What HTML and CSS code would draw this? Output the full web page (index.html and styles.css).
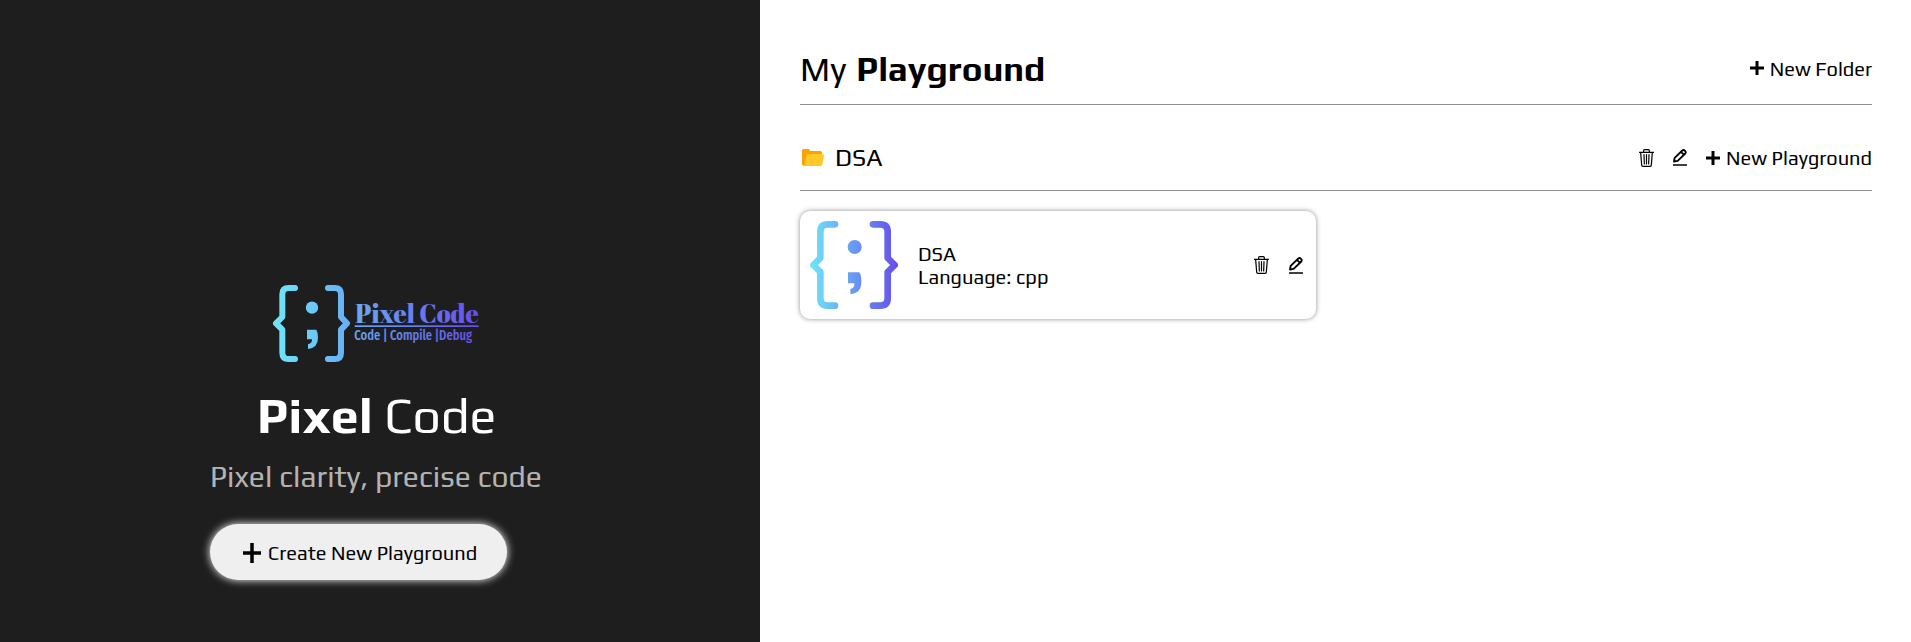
FILE: index.html
```html
<!DOCTYPE html>
<html lang="en">
<head>
<meta charset="utf-8">
<title>Pixel Code</title>
<link rel="stylesheet" href="styles.css">
</head>
<body>
<svg class="defs" width="0" height="0" aria-hidden="true">
  <symbol id="trash" viewBox="0 0 45 54">
    <path d="M1 10H44M14 9V5Q14 2 17 2H28Q31 2 31 5V9M5 11L8 48Q8 52 12 52H33Q37 52 37 48L40 11M15 17L16 45M22.500 17V45M30 17L29 45" fill="none" stroke="currentColor" stroke-width="3.600" stroke-linecap="round"/>
  </symbol>
  <symbol id="pen" viewBox="0 0 42 50">
    <path d="M3 37L5 26L28 4Q32 1 36 5Q40 9 37 13L14 35ZM24 8L33 17" fill="none" stroke="currentColor" stroke-width="5.500" stroke-linejoin="round"/>
    <path d="M0 47.500H42" stroke="currentColor" stroke-width="4.500"/>
  </symbol>
</svg>
<div class="page">
  <aside class="hero">
    <svg class="brand" viewBox="0 0 750 315">
      <defs>
        <linearGradient id="brandFill" gradientUnits="userSpaceOnUse" x1="69" y1="0" x2="686" y2="0">
          <stop offset="0" stop-color="#6fe6f8"/><stop offset=".38" stop-color="#69acf4"/><stop offset="1" stop-color="#674eee"/>
        </linearGradient>
      </defs>
      <g fill="none" stroke="url(#brandFill)" stroke-width="18" stroke-linecap="round" stroke-linejoin="round">
        <path d="M135 54H116Q97 54 97 73V141L78 160L97 179V248Q97 267 116 267H135"/>
        <path d="M234 54H254Q273 54 273 73V141L291 160L273 179V248Q273 267 254 267H234"/>
      </g>
      <g fill="url(#brandFill)">
        <circle cx="186" cy="113" r="18.500"/>
        <path d="M171 179H199Q204 187 204 203Q204 233 174 237V223Q187 220 186 208H171Z"/>
        <rect x="314" y="166" width="372" height="5"/>
        <text class="brand-name" x="316" y="159" textLength="370" lengthAdjust="spacingAndGlyphs">Pixel Code</text>
        <text class="brand-tag" x="313" y="211" textLength="353" lengthAdjust="spacingAndGlyphs">Code | Compile |Debug</text>
      </g>
    </svg>
    <h1 class="hero-title"><b>Pixel</b> Code</h1>
    <p class="hero-tag">Pixel clarity, precise code</p>
    <button class="create"><svg class="plus plus-lg" viewBox="0 0 18 20"><path d="M9 0V20M0 10H18"/></svg><span>Create New Playground</span></button>
  </aside>
  <main class="content">
    <header class="bar bar-top">
      <h2 class="title">My <b>Playground</b></h2>
      <button class="link"><svg class="plus" viewBox="0 0 14 14"><path d="M7 0V14M0 7H14"/></svg><span>New Folder</span></button>
    </header>
    <section class="bar bar-folder">
      <div class="folder">
        <svg class="folder-icon" viewBox="0 0 66 51"><path d="M4 0H19Q22 0 25 6H54Q60 6 60 12V20L10 50H5Q0 50 0 44V5Q0 0 4 0Z" fill="#ffa000"/><path d="M18 15H61Q66 15 66 20L61 46Q60 51 55 51H7L12 20Q13 15 18 15Z" fill="#ffca28"/></svg>
        <span>DSA</span>
      </div>
      <div class="actions">
        <svg class="trash"><use href="#trash"/></svg>
        <svg class="pen"><use href="#pen"/></svg>
        <button class="link"><svg class="plus" viewBox="0 0 14 14"><path d="M7 0V14M0 7H14"/></svg><span>New Playground</span></button>
      </div>
    </section>
    <article class="card">
      <svg class="card-logo" viewBox="60 63 264 264">
        <defs>
          <linearGradient id="cardFill" gradientUnits="userSpaceOnUse" x1="60" y1="0" x2="324" y2="0">
            <stop offset="0" stop-color="#6fe6f8"/><stop offset=".4" stop-color="#69a8f4"/><stop offset="1" stop-color="#654eec"/>
          </linearGradient>
        </defs>
        <g fill="none" stroke="url(#cardFill)" stroke-width="20" stroke-linecap="round" stroke-linejoin="round">
          <path d="M135 73H113Q91 73 91 95V174L70 195L91 216V295Q91 317 113 317H135"/>
          <path d="M249 73H271Q293 73 293 95V174L314 195L293 216V295Q293 317 271 317H249"/>
        </g>
        <g fill="url(#cardFill)"><circle cx="194" cy="141" r="21"/><path d="M174 217H208Q214 225 214 245Q214 280 181 282V267Q195 264 193 250H174Z"/></g>
      </svg>
      <div class="card-text"><p>DSA</p><p>Language: cpp</p></div>
      <svg class="trash"><use href="#trash"/></svg>
      <svg class="pen"><use href="#pen"/></svg>
    </article>
  </main>
</div>
</body>
</html>
```
FILE: styles.css
```css
* { box-sizing: border-box; margin: 0; padding: 0; }
body { font-family: Play, Inter, "Open Sans", sans-serif; color: #000; background: #fff; }
.defs { position: absolute; }
.page { display: flex; height: 642px; overflow: hidden; }
.hero { width: 760px; background: #1e1e1e; color: #fff; padding: 270px 0 0 210px; display: flex; flex-direction: column; align-items: flex-start; }
.brand { width: 250px; height: 105px; margin-left: 40px; flex: none; overflow: visible; }
.brand-name { font: 400 80px "Abril Fatface", "Playfair Display", "Liberation Serif", serif; }
.brand-tag { font: 500 42px "Fira Sans Condensed", "Open Sans", sans-serif; }
.hero-title { font-size: 50px; font-weight: 400; line-height: 58px; height: 58px; margin: 11px 0 0 47px; white-space: nowrap; }
.hero-tag { font-size: 30px; font-weight: 500; line-height: 36px; height: 36px; margin-top: 15px; color: #b3b3b3; white-space: nowrap; }
button { font-family: inherit; border: 0; background: none; color: inherit; white-space: nowrap; display: flex; align-items: center; }
.create { width: 297px; height: 56px; margin-top: 29px; border-radius: 28px; padding-left: 33px; gap: 7px; background: #efefef; color: #000; font-size: 20px; box-shadow: 0 0 8px #fff; }
.plus { width: 14px; height: 14px; flex: none; stroke: #000; stroke-width: 3; }
.plus-lg { width: 18px; height: 20px; stroke-width: 3.500; margin-top: 2px; }
.content { flex: 1; padding: 0 39px 0 40px; }
.bar { display: flex; justify-content: space-between; align-items: center; border-bottom: 1px solid #919191; }
.bar-top { height: 105px; padding-top: 32px; }
.bar-folder { height: 86px; padding-top: 20px; }
.title { font-size: 35px; font-weight: 400; white-space: nowrap; word-spacing: 2px; }
.link { font-size: 20px; gap: 7px; }
.link span { margin-left: -1px; }
.link .plus { margin-left: -1px; }
.folder { display: flex; align-items: center; gap: 11px; padding-left: 2px; font-size: 25px; }
.folder-icon { width: 22px; height: 17px; }
.actions { display: flex; align-items: center; }
.trash { width: 15px; height: 18px; margin-right: 19px; flex: none; }
.pen { width: 14px; height: 17px; margin-right: 20px; flex: none; }
.card { width: 516px; height: 108px; margin-top: 20px; border-radius: 10px; padding-left: 10px; display: flex; align-items: center; box-shadow: 0 0 5px rgba(0,0,0,.45); }
.card .pen { margin-right: 13px; }
.card .trash { margin-right: 20px; }
.card-logo { width: 88px; height: 88px; flex: none; }
.card-text { flex: 1; margin-left: 20px; font-size: 20px; line-height: 23px; }
```
